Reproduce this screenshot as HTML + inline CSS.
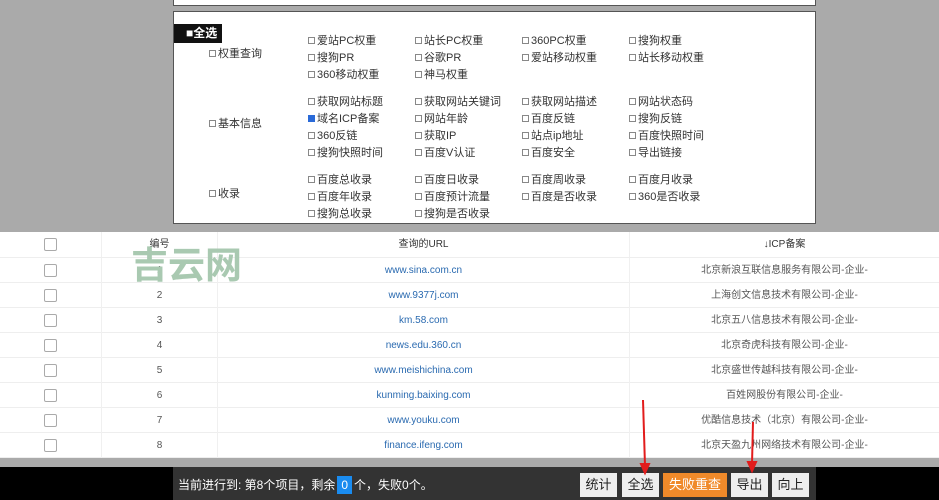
<!DOCTYPE html><html><head><meta charset="utf-8"><style>
*{margin:0;padding:0;box-sizing:border-box}
body{width:939px;height:500px;overflow:hidden;background:#fff;font-family:"Liberation Sans","Noto Sans CJK SC",sans-serif;position:relative}
.a{position:absolute}
.gray{left:0;top:0;width:939px;height:232px;background:#aaa}
.p1{left:173px;top:-2px;width:643px;height:8px;background:#fff;border:1px solid #555}
.p2{left:173px;top:11px;width:643px;height:213px;background:#fff;border:1px solid #555}
.cb{font-size:11px;color:#333;white-space:nowrap;line-height:14px}
.cb i{display:inline-block;width:7px;height:7px;border:1px solid #888;margin-right:2px;vertical-align:0px}
.cb i.on{background:#2a6ad8;border-color:#2a6ad8}
.row{left:0;width:939px;height:25px;border-bottom:1px solid #eee;font-size:10px;color:#555}
.row div{position:absolute;top:0;height:25px;line-height:25px;text-align:center}
.c0{left:0;width:102px;border-right:1px solid #f0f0f0}
.c1{left:102px;width:116px;border-right:1px solid #f0f0f0}
.c2{left:218px;width:412px;border-right:1px solid #f0f0f0;color:#2a6ab0}
.c3{left:630px;width:309px}
.box{display:inline-block;width:13px;height:13px;border:1px solid #aaa;border-radius:2px;vertical-align:middle}
.btn{top:473px;height:24px;line-height:24px;background:#eee;color:#222;font-size:13px;text-align:center}
</style></head><body>
<div class="a gray"></div>
<div class="a p1"></div>
<div class="a p2"></div>
<div class="a" style="left:174px;top:24px;width:48px;height:19px;background:#111;color:#fff;font-size:12px;font-weight:bold;line-height:19px;padding-left:12px">■全选</div>
<div class="a cb" style="left:209px;top:47px"><i></i>权重查询</div>
<div class="a cb" style="left:209px;top:117px"><i></i>基本信息</div>
<div class="a cb" style="left:209px;top:187px"><i></i>收录</div>

<div class="a cb" style="left:308px;top:34px"><i></i>爱站PC权重</div><div class="a cb" style="left:415px;top:34px"><i></i>站长PC权重</div><div class="a cb" style="left:522px;top:34px"><i></i>360PC权重</div><div class="a cb" style="left:629px;top:34px"><i></i>搜狗权重</div>
<div class="a cb" style="left:308px;top:51px"><i></i>搜狗PR</div><div class="a cb" style="left:415px;top:51px"><i></i>谷歌PR</div><div class="a cb" style="left:522px;top:51px"><i></i>爱站移动权重</div><div class="a cb" style="left:629px;top:51px"><i></i>站长移动权重</div>
<div class="a cb" style="left:308px;top:68px"><i></i>360移动权重</div><div class="a cb" style="left:415px;top:68px"><i></i>神马权重</div>

<div class="a cb" style="left:308px;top:95px"><i></i>获取网站标题</div><div class="a cb" style="left:415px;top:95px"><i></i>获取网站关键词</div><div class="a cb" style="left:522px;top:95px"><i></i>获取网站描述</div><div class="a cb" style="left:629px;top:95px"><i></i>网站状态码</div>
<div class="a cb" style="left:308px;top:112px"><i class="on"></i>域名ICP备案</div><div class="a cb" style="left:415px;top:112px"><i></i>网站年龄</div><div class="a cb" style="left:522px;top:112px"><i></i>百度反链</div><div class="a cb" style="left:629px;top:112px"><i></i>搜狗反链</div>
<div class="a cb" style="left:308px;top:129px"><i></i>360反链</div><div class="a cb" style="left:415px;top:129px"><i></i>获取IP</div><div class="a cb" style="left:522px;top:129px"><i></i>站点ip地址</div><div class="a cb" style="left:629px;top:129px"><i></i>百度快照时间</div>
<div class="a cb" style="left:308px;top:146px"><i></i>搜狗快照时间</div><div class="a cb" style="left:415px;top:146px"><i></i>百度V认证</div><div class="a cb" style="left:522px;top:146px"><i></i>百度安全</div><div class="a cb" style="left:629px;top:146px"><i></i>导出链接</div>

<div class="a cb" style="left:308px;top:173px"><i></i>百度总收录</div><div class="a cb" style="left:415px;top:173px"><i></i>百度日收录</div><div class="a cb" style="left:522px;top:173px"><i></i>百度周收录</div><div class="a cb" style="left:629px;top:173px"><i></i>百度月收录</div>
<div class="a cb" style="left:308px;top:190px"><i></i>百度年收录</div><div class="a cb" style="left:415px;top:190px"><i></i>百度预计流量</div><div class="a cb" style="left:522px;top:190px"><i></i>百度是否收录</div><div class="a cb" style="left:629px;top:190px"><i></i>360是否收录</div>
<div class="a cb" style="left:308px;top:207px"><i></i>搜狗总收录</div><div class="a cb" style="left:415px;top:207px"><i></i>搜狗是否收录</div>

<div class="a row" style="top:232px;height:26px"><div class="c0"><span class="box"></span></div><div class="c1" style="color:#333">编号</div><div class="c2" style="color:#333">查询的URL</div><div class="c3" style="color:#333">↓ICP备案</div></div>
<div class="a row" style="top:258px"><div class="c0"><span class="box"></span></div><div class="c1">1</div><div class="c2">www.sina.com.cn</div><div class="c3">北京新浪互联信息服务有限公司-企业-</div></div>
<div class="a row" style="top:283px"><div class="c0"><span class="box"></span></div><div class="c1">2</div><div class="c2">www.9377j.com</div><div class="c3">上海创文信息技术有限公司-企业-</div></div>
<div class="a row" style="top:308px"><div class="c0"><span class="box"></span></div><div class="c1">3</div><div class="c2">km.58.com</div><div class="c3">北京五八信息技术有限公司-企业-</div></div>
<div class="a row" style="top:333px"><div class="c0"><span class="box"></span></div><div class="c1">4</div><div class="c2">news.edu.360.cn</div><div class="c3">北京奇虎科技有限公司-企业-</div></div>
<div class="a row" style="top:358px"><div class="c0"><span class="box"></span></div><div class="c1">5</div><div class="c2">www.meishichina.com</div><div class="c3">北京盛世传越科技有限公司-企业-</div></div>
<div class="a row" style="top:383px"><div class="c0"><span class="box"></span></div><div class="c1">6</div><div class="c2">kunming.baixing.com</div><div class="c3">百姓网股份有限公司-企业-</div></div>
<div class="a row" style="top:408px"><div class="c0"><span class="box"></span></div><div class="c1">7</div><div class="c2">www.youku.com</div><div class="c3">优酷信息技术（北京）有限公司-企业-</div></div>
<div class="a row" style="top:433px"><div class="c0"><span class="box"></span></div><div class="c1">8</div><div class="c2">finance.ifeng.com</div><div class="c3">北京天盈九州网络技术有限公司-企业-</div></div>
<div class="a" style="left:131px;top:244px;font-size:37px;line-height:44px;font-weight:bold;color:#a9c9b1">吉云网</div>

<div class="a" style="left:0;top:458px;width:939px;height:9px;background:#aaa"></div>
<div class="a" style="left:0;top:467px;width:939px;height:33px;background:#000"></div>
<div class="a" style="left:173px;top:467px;width:643px;height:33px;background:#333"></div>
<div class="a" style="left:178px;top:476px;font-size:12px;color:#fff;white-space:nowrap">当前进行到: 第8个项目，剩余<span style="background:#1a8cf0;padding:2px 4px;margin:0 2px">0</span>个，失败0个。</div>
<div class="a btn" style="left:580px;width:37px">统计</div>
<div class="a btn" style="left:622px;width:37px">全选</div>
<div class="a btn" style="left:663px;width:64px;background:#f08a2a;color:#fff">失败重查</div>
<div class="a btn" style="left:731px;width:37px">导出</div>
<div class="a btn" style="left:772px;width:37px">向上</div>
<svg class="a" style="left:0;top:0" width="939" height="500"><g stroke="#e21c1c" stroke-width="2" fill="#e21c1c"><line x1="643" y1="400" x2="645" y2="466"/><polygon points="641,464 649,464 645,473"/><line x1="753" y1="422" x2="752" y2="464"/><polygon points="748,462 756,462 752,471"/></g></svg>
</body></html>
